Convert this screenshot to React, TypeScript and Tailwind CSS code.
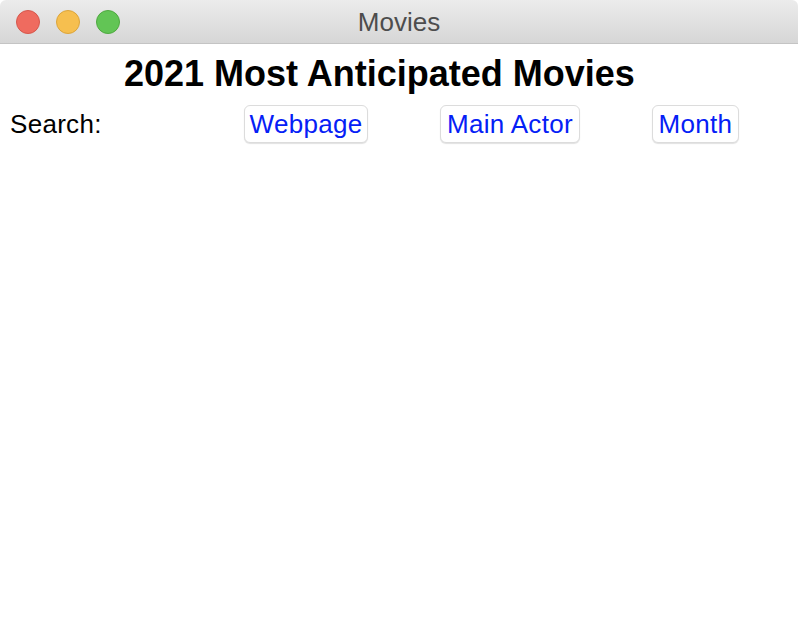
const TrafficLight = ({ fill, stroke }: { fill: string; stroke: string }) => (
  <span
    className="block h-6 w-6 rounded-full border"
    style={{ backgroundColor: fill, borderColor: stroke }}
  />
);

const SearchButton = ({ label, width }: { label: string; width: string }) => (
  <button
    className={`${width} h-[38px] flex items-center justify-center rounded-[6px] border border-[#dcdcdc] bg-white shadow-[0_1px_1px_rgba(0,0,0,0.12)] text-[26px] tracking-[0.3px] leading-none text-[#0520f6]`}
  >
    {label}
  </button>
);

export default function App() {
  return (
    <div className="h-[642px] w-[798px] bg-white font-['Liberation_Sans',Arial,sans-serif] overflow-hidden">
      {/* Title bar */}
      <div className="relative flex h-11 items-center rounded-t-[6px] border-b border-[#c4c4c4] bg-gradient-to-b from-[#ececec] to-[#d6d6d6]">
        <div className="flex items-center gap-4 pl-4">
          <TrafficLight fill="#ef6b5f" stroke="#d6574c" />
          <TrafficLight fill="#f6bf4f" stroke="#dca53b" />
          <TrafficLight fill="#62c555" stroke="#4fa940" />
        </div>
        <span className="absolute left-1/2 top-[6px] -translate-x-1/2 text-[26px] leading-[32px] text-[#4d4d4d]">
          Movies
        </span>
      </div>

      {/* Heading */}
      <h1 className="mt-[10px] pl-[124px] text-[36px] font-bold leading-[40px] text-black">
        2021 Most Anticipated Movies
      </h1>

      {/* Search row */}
      <div className="mt-[11px] flex items-center">
        <span className="w-[244px] pl-[10px] text-[26px] tracking-[0.3px] leading-none text-black">Search:</span>
        <div className="flex items-center gap-[72px]">
          <SearchButton label="Webpage" width="w-[124px]" />
          <SearchButton label="Main Actor" width="w-[140px]" />
          <SearchButton label="Month" width="w-[87px]" />
        </div>
      </div>
    </div>
  );
}
